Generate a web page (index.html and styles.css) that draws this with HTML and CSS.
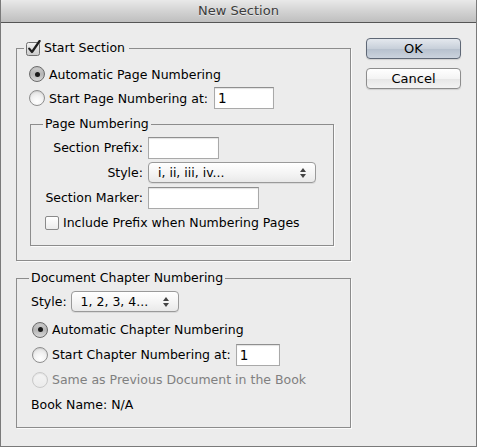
FILE: index.html
```html
<!DOCTYPE html>
<html>
<head>
<meta charset="utf-8">
<link rel="stylesheet" href="styles.css">
</head>
<body>
<div class="window">
  <div class="titlebar">New Section</div>
  <div class="content">
    <div class="main">
      <fieldset class="group group-section">
        <legend class="legend legend-check">
          <svg class="checkbox" width="16" height="16" viewBox="0 0 16 16">
            <defs>
              <linearGradient id="cbg" x1="0" y1="0" x2="0" y2="1">
                <stop offset="0" stop-color="#f4f4f4"/>
                <stop offset="1" stop-color="#c9c9c9"/>
              </linearGradient>
            </defs>
            <rect x="0.5" y="2.5" width="13" height="13" rx="2" fill="url(#cbg)" stroke="#6f6f6f"/>
            <path d="M3.2 8.6 L6 12 L13.6 1" fill="none" stroke="#1e1e1e" stroke-width="2.2" stroke-linecap="round" stroke-linejoin="round"/>
          </svg>
          <span>Start Section</span>
        </legend>
        <div class="group-body section-body">
          <div class="row">
            <span class="radio on"></span><span>Automatic Page Numbering</span>
          </div>
          <div class="row">
            <span class="radio"></span><span>Start Page Numbering at:</span>
            <span class="textfield start-page">1</span>
          </div>
          <fieldset class="group group-inner">
            <legend class="legend">Page Numbering</legend>
            <div class="group-body inner-body">
              <div class="form-row">
                <span class="label">Section Prefix:</span>
                <span class="textfield prefix"></span>
              </div>
              <div class="form-row">
                <span class="label">Style:</span>
                <span class="select page-style"><span>i, ii, iii, iv...</span><span class="arrows"></span></span>
              </div>
              <div class="form-row">
                <span class="label">Section Marker:</span>
                <span class="textfield marker"></span>
              </div>
              <div class="row check-row">
                <span class="box"></span><span>Include Prefix when Numbering Pages</span>
              </div>
            </div>
          </fieldset>
        </div>
      </fieldset>

      <fieldset class="group group-chapter">
        <legend class="legend legend-chapter">Document Chapter Numbering</legend>
        <div class="group-body chapter-body">
          <div class="row style-row">
            <span>Style:</span>
            <span class="select chapter-style"><span>1, 2, 3, 4...</span><span class="arrows"></span></span>
          </div>
          <div class="row">
            <span class="radio on"></span><span>Automatic Chapter Numbering</span>
          </div>
          <div class="row">
            <span class="radio"></span><span>Start Chapter Numbering at:</span>
            <span class="textfield start-chapter">1</span>
          </div>
          <div class="row disabled">
            <span class="radio off"></span><span>Same as Previous Document in the Book</span>
          </div>
          <div class="row">
            <span>Book Name: N/A</span>
          </div>
        </div>
      </fieldset>
    </div>
    <div class="buttons">
      <div class="button default">OK</div>
      <div class="button">Cancel</div>
    </div>
  </div>
</div>
</body>
</html>
```
FILE: styles.css
```css
* { box-sizing: border-box; }
html, body { margin: 0; padding: 0; background: #ececec; }
body {
  font-family: "DejaVu Sans", "Liberation Sans", sans-serif;
  font-size: 12.5px;
  color: #000;
}
.window {
  width: 477px;
  height: 447px;
  background: #ececec;
  border: 1px solid #7a7a7a;
  border-top: none;
  display: flex;
  flex-direction: column;
}
.titlebar {
  height: 23px;
  flex: none;
  border-bottom: 1px solid #555;
  border-radius: 4px 4px 0 0;
  background: linear-gradient(#e9e9e9, #d3d3d3 50%, #bfbfbf);
  color: #3c3c3c;
  text-align: center;
  line-height: 22px;
  font-size: 13px;
  text-shadow: 0 1px 0 rgba(255,255,255,0.5);
}
.content {
  flex: 1;
  display: flex;
  padding-left: 15px;
}
.main {
  padding-top: 17px;
  display: flex;
  flex-direction: column;
}
.group {
  margin: 0;
  padding: 0;
  border: 1px solid #8c8c8c;
  box-shadow: 1px 1px 0 #fbfbfb;
  min-width: 0;
}
.legend {
  padding: 0 2px;
  height: 16px;
  line-height: 16px;
  display: flex;
  align-items: center;
  gap: 2px;
}
.legend-check { margin-left: 7px; padding-right: 4px; }
.group-section { width: 335px; }
.group-inner { width: 304px; margin: 6px 0 0 2px; }
.group-inner .legend { margin-left: 12px; }
.group-chapter { width: 335px; margin-top: 9px; }
.legend-chapter { margin-left: 12px; }

.group-body { display: flex; flex-direction: column; }
.section-body { padding: 6px 0 14px 11px; }
.row {
  height: 24px;
  display: flex;
  align-items: center;
  gap: 5px;
  white-space: nowrap;
}
.inner-body { padding: 3px 0 10px 14px; }
.form-row {
  height: 25px;
  display: grid;
  grid-template-columns: 98px auto;
  column-gap: 5px;
  align-items: center;
  justify-items: start;
}
.form-row .label { justify-self: end; }
.check-row { height: 25px; gap: 4px; }

.chapter-body { padding: 3px 0 10px 14px; }
.chapter-body .row { height: 25px; }
.style-row { gap: 5px; margin-bottom: 3px; }
.disabled { color: #808080; }

.radio {
  width: 16px;
  height: 16px;
  flex: none;
  border-radius: 50%;
  border: 1px solid #8e8e8e;
  background: radial-gradient(circle at 50% 75%, #ffffff 0, #f2f2f2 45%, #d8d8d8 100%);
  box-shadow: inset 0 1px 1px rgba(0,0,0,0.08);
  margin-left: 1px;
  margin-right: -1px;
  position: relative;
}
.radio.on {
  border-color: #6a6a6a;
  background: linear-gradient(#cfcfcf, #b5b5b5 50%, #d8d8d8);
}
.radio.on::after {
  content: "";
  position: absolute;
  width: 5px;
  height: 5px;
  left: 4.5px;
  top: 4.5px;
  border-radius: 50%;
  background: #1a1a1a;
}
.radio.off {
  border-color: #c9c9c9;
  background: linear-gradient(#f4f4f4, #ebebeb);
}
.box {
  width: 14px;
  height: 14px;
  flex: none;
  border: 1px solid #8a8a8a;
  border-radius: 2px;
  background: linear-gradient(#ffffff, #ececec);
}

.textfield {
  display: inline-block;
  height: 22px;
  line-height: 20px;
  background: #fff;
  border: 1px solid #a9a9a9;
  border-top-color: #8f8f8f;
  box-shadow: inset 0 1px 1px rgba(0,0,0,0.12);
  padding-left: 3px;
  font-size: 13.5px;
}
.start-page { width: 60px; margin-left: 1px; }
.prefix { width: 71px; }
.marker { width: 111px; }
.start-chapter { width: 44px; margin-left: 0; }

.select {
  position: relative;
  display: flex;
  align-items: center;
  height: 21px;
  border: 1px solid #9a9a9a;
  border-radius: 4px;
  background: linear-gradient(#ffffff, #f3f3f3 60%, #e9e9e9);
  box-shadow: 0 1px 0 rgba(0,0,0,0.08);
  padding-left: 9px;
}
.page-style { width: 168px; }
.chapter-style { width: 108px; padding-left: 9px; margin-left: -1px; }
.arrows {
  position: absolute;
  right: 9px;
  top: 5px;
  width: 6px;
  height: 10px;
}
.arrows::before, .arrows::after {
  content: "";
  position: absolute;
  left: 0;
  border-left: 3px solid transparent;
  border-right: 3px solid transparent;
}
.arrows::before { top: 0; border-bottom: 4px solid #444; }
.arrows::after { bottom: 0; border-top: 4px solid #444; }

.buttons {
  margin-left: 15px;
  padding-top: 15px;
  display: flex;
  flex-direction: column;
  gap: 9px;
}
.button {
  width: 95px;
  height: 21px;
  line-height: 19px;
  text-align: center;
  border: 1px solid #8d8d8d;
  border-radius: 4px;
  background: linear-gradient(#ffffff, #f4f4f4 50%, #e6e6e6 51%, #f3f3f3);
  box-shadow: 0 1px 1px rgba(0,0,0,0.12);
  font-size: 13px;
}
.button.default {
  border-color: #5f6876;
  background: linear-gradient(#e4e8ee, #c8d0da 50%, #b6c0cd 51%, #cbd3dd);
}
```
